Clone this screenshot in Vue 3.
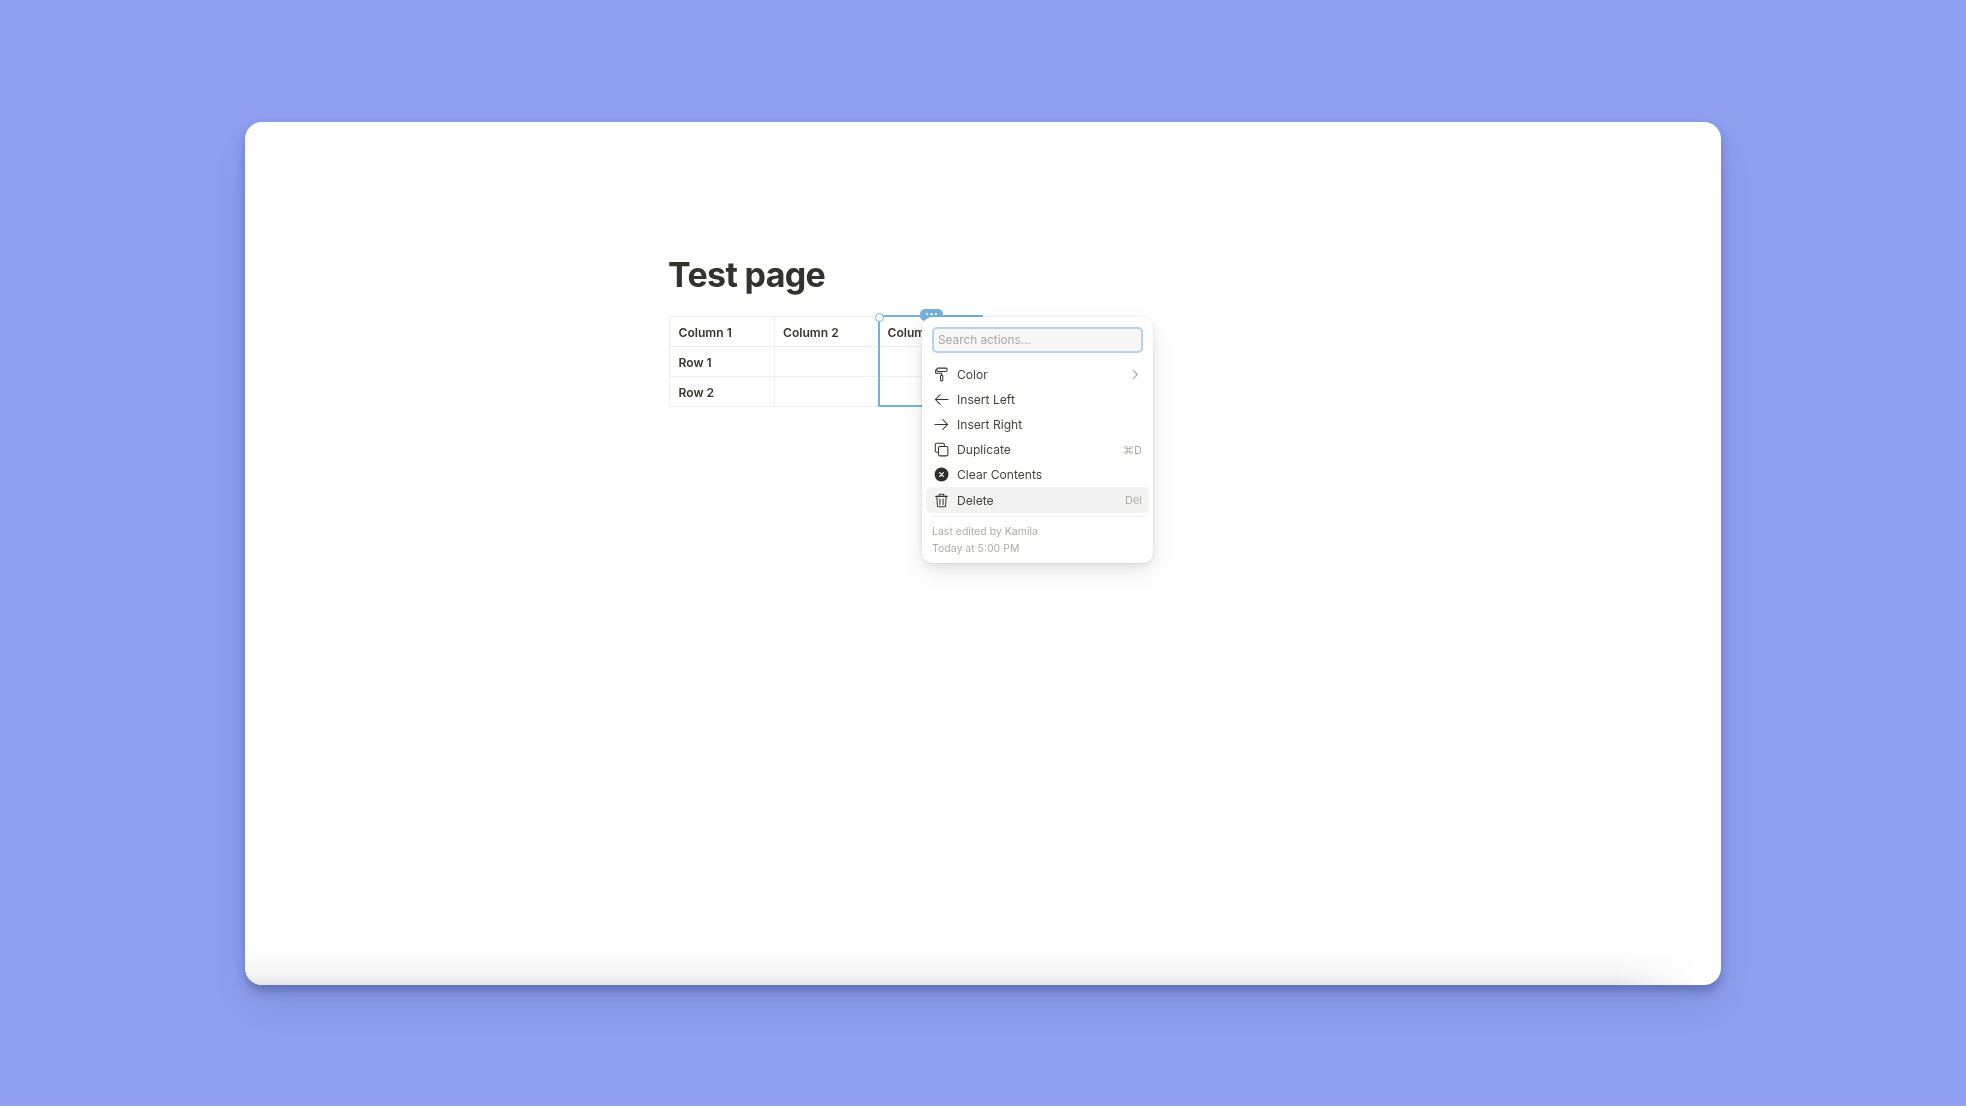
<script setup>
const rows = [
  ['Column 1', 'Column 2', 'Column 3'],
  ['Row 1', '', ''],
  ['Row 2', '', ''],
]
const items = [
  { label: 'Color', icon: 'color', chevron: true },
  { label: 'Insert Left', icon: 'left' },
  { label: 'Insert Right', icon: 'right' },
  { label: 'Duplicate', icon: 'dup', hint: '⌘D' },
  { label: 'Clear Contents', icon: 'clear' },
  { label: 'Delete', icon: 'trash', hint: 'Del', active: true },
]
</script>

<template>
  <div class="page">
    <main class="window">
      <div class="content">
        <h1 class="title">Test page</h1>
        <div class="table-wrap">
          <div class="table">
            <template v-for="(row, r) in rows" :key="r">
              <div v-for="(cell, c) in row" :key="c" class="cell">{{ cell }}</div>
            </template>
          </div>
          <div class="col-select">
            <span class="handle"></span>
            <span class="tag"><i></i><i></i><i></i></span>
          </div>
          <div class="menu">
            <div class="search">Search actions...</div>
            <ul class="list">
              <li v-for="item in items" :key="item.label" class="item" :class="{ active: item.active }">
                <svg class="icon" viewBox="0 0 16 16" fill="none" stroke="#37352f" stroke-width="1.1" stroke-linecap="round" stroke-linejoin="round">
                  <template v-if="item.icon === 'color'">
                    <rect x="3" y="1.2" width="11" height="3.6" rx="1.4" />
                    <path d="M3 3H1.8v3.6h6.4v2.2" />
                    <rect x="7" y="8.8" width="2.4" height="6" rx="0.9" />
                  </template>
                  <path v-else-if="item.icon === 'left'" d="M15 8H1.4M6.6 2.8 1.4 8l5.2 5.2" />
                  <path v-else-if="item.icon === 'right'" d="M1 8h13.6M9.4 2.8 14.6 8l-5.2 5.2" />
                  <template v-else-if="item.icon === 'dup'">
                    <path d="M11 4.6V2.8c0-.9-.5-1.4-1.4-1.4H2.8c-.9 0-1.4.5-1.4 1.4v6.8c0 .9.5 1.4 1.4 1.4h1.8" />
                    <rect x="4.8" y="4.8" width="10" height="10" rx="1.4" />
                  </template>
                  <template v-else-if="item.icon === 'clear'">
                    <circle cx="8" cy="8" r="7.4" fill="#2f2e2b" stroke="none" />
                    <path d="M6 6l4 4M10 6l-4 4" stroke="#fff" stroke-width="1.3" />
                  </template>
                  <template v-else>
                    <path d="M1.8 3.6h12.4M5.5 3.6V2.2c0-.5.3-.8.8-.8h3.4c.5 0 .8.3.8.8v1.4" />
                    <path d="M3 3.6l.7 10c0 .7.4 1.1 1.1 1.1h6.4c.7 0 1.1-.4 1.1-1.1l.7-10M6.3 6.4v5.8M9.7 6.4v5.8" />
                  </template>
                </svg>
                <span class="label">{{ item.label }}</span>
                <span v-if="item.hint" class="hint">{{ item.hint }}</span>
                <svg v-if="item.chevron" class="chevron" viewBox="0 0 8 12" fill="none" stroke="#a9a8a5" stroke-width="1.2" stroke-linecap="round" stroke-linejoin="round">
                  <path d="M2 1.5 6.5 6 2 10.5" />
                </svg>
              </li>
            </ul>
            <div class="footer">
              <div>Last edited by Kamila</div>
              <div>Today at 5:00 PM</div>
            </div>
          </div>
        </div>
      </div>
    </main>
  </div>
</template>

<style>
html, body { margin: 0; background: #fff; }
</style>

<style scoped>
.page {
  height: 1106px;
  overflow: hidden;
  background: #8d9fee;
  padding: 122px 0 0 245px;
  box-sizing: border-box;
  font-family: Inter, "Liberation Sans", sans-serif;
  color: #37352f;
}
.window {
  position: relative;
  width: 1476px;
  height: 863px;
  background: #fff;
  border-radius: 17px;
  box-shadow: 0 7px 9px -1px rgba(50, 60, 120, .3), 0 22px 36px -6px rgba(50, 60, 120, .14), 0 6px 14px rgba(50, 60, 120, .1);
}
.window::after {
  content: "";
  position: absolute;
  left: 0;
  right: 0;
  bottom: 0;
  height: 36px;
  border-radius: 0 0 17px 17px;
  background: linear-gradient(to top, #e6e6e7, #f4f4f4 30%, #fff);
  -webkit-mask-image: linear-gradient(to right, #000 93%, transparent 98.5%);
  mask-image: linear-gradient(to right, #000 93%, transparent 98.5%);
}
.content {
  padding: 131px 0 0 423px;
  filter: blur(.5px);
}
.title {
  margin: 0 0 20px;
  height: 43px;
  font-size: 34px;
  line-height: 43px;
  font-weight: 700;
  letter-spacing: -.65px;
  color: #33322d;
}
.table-wrap {
  position: relative;
  width: 314px;
  left: 1px;
}
.table {
  display: grid;
  grid-template-columns: 104.5px 104.5px 105px;
  grid-auto-rows: 30px;
  border-top: 1px solid #eeeeed;
  border-left: 1px solid #eeeeed;
  box-sizing: border-box;
}
.cell {
  box-sizing: border-box;
  border-right: 1px solid #eeeeed;
  border-bottom: 1px solid #eeeeed;
  padding: 1px 0 0 8.5px;
  font-size: 12.1px;
  line-height: 29px;
  font-weight: 600;
  color: #37352f;
  white-space: nowrap;
}
.col-select {
  position: absolute;
  left: 209px;
  top: -1px;
  width: 105px;
  height: 92px;
  box-sizing: border-box;
  border: 2px solid #74b2db;
  border-right: 0;
  border-radius: 2px 0 0 2px;
}
.handle {
  position: absolute;
  left: -5px;
  top: -4px;
  width: 7px;
  height: 7px;
  border-radius: 50%;
  background: #fff;
  border: 1.5px solid #74b2db;
}
.tag {
  position: absolute;
  left: 40px;
  top: -8px;
  width: 23px;
  height: 12px;
  border-radius: 5px 5px 2px 5px;
  background: #74b2db;
  display: flex;
  justify-content: center;
  align-items: center;
  gap: 2px;
  padding-bottom: 2px;
  box-sizing: border-box;
}
.tag i {
  width: 2.4px;
  height: 2.4px;
  border-radius: 50%;
  background: #fff;
}
.menu {
  position: absolute;
  left: 253px;
  top: 1px;
  width: 231px;
  height: 246px;
  box-sizing: border-box;
  padding: 10px 4px 0;
  background: #fff;
  border-radius: 10px;
  box-shadow: 0 0 0 1px rgba(15, 15, 15, .03), 0 3px 8px rgba(15, 15, 15, .08), 0 9px 24px rgba(15, 15, 15, .09);
}
.search {
  margin: 0 6px;
  height: 26px;
  box-sizing: border-box;
  border: 2px solid #b4d1ee;
  border-radius: 5px;
  background: #f7f7f6;
  padding-left: 4px;
  font-size: 11.8px;
  line-height: 22px;
  color: #a9a8a5;
}
.list {
  list-style: none;
  margin: 9px 0 0;
  padding: 0;
}
.item {
  display: flex;
  align-items: center;
  height: 25.1px;
  padding: 0 7px;
  border-radius: 5px;
  font-size: 12.1px;
  color: #44433e;
}
.item.active { background: #f3f3f3; }
.icon {
  width: 15px;
  height: 15px;
  flex: none;
  margin: 0 9px 0 1px;
}
.label { flex: 1; white-space: nowrap; margin-left: -1px; }
.hint {
  font-size: 11px;
  color: #aeada9;
}
.chevron {
  width: 8px;
  height: 11px;
  margin-right: 3px;
}
.footer {
  margin: 3px 6px 0;
  padding-top: 6px;
  border-top: 1px solid #eeeeed;
  font-size: 10.5px;
  line-height: 17.5px;
  color: #aeada9;
}
</style>
